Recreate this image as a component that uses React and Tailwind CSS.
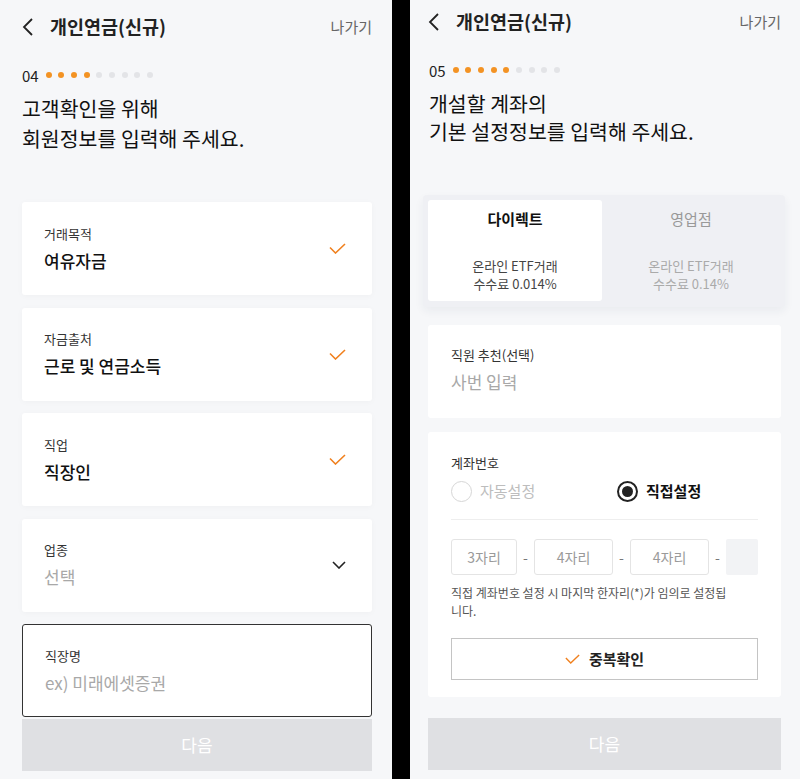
const FONT = { fontFamily: '"Noto Sans CJK KR", "Noto Sans", sans-serif' };

function Chevron() {
  return (
    <svg width="12" height="20" viewBox="0 0 12 20" fill="none">
      <path d="M10 2 L2 10 L10 18" stroke="#222" strokeWidth="1.8" />
    </svg>
  );
}

function Check({ w = 17, h = 11 }) {
  return (
    <svg width={w} height={h} viewBox="0 0 17 11" fill="none">
      <path d="M1 4.5 L6.5 10 L16 1" stroke="#f0801e" strokeWidth="1.6" />
    </svg>
  );
}

function ChevronDown() {
  return (
    <svg width="14" height="8" viewBox="0 0 14 8" fill="none">
      <path d="M1 1 L7 7 L13 1" stroke="#222" strokeWidth="1.6" />
    </svg>
  );
}

function Header({ pad }) {
  return (
    <div className={`flex items-center justify-between ${pad}`}>
      <div className="flex items-center">
        <Chevron />
        <span className="ml-[16px] text-[18.5px] font-bold text-[#222]">개인연금(신규)</span>
      </div>
      <span className="text-[15px] text-[#666]">나가기</span>
    </div>
  );
}

function Steps({ no, done }) {
  return (
    <div className="flex items-center">
      <span className="text-[15px] text-[#222] leading-none">{no}</span>
      <div className="ml-[7px] flex items-center gap-[6.7px]">
        {[0, 1, 2, 3, 4, 5, 6, 7, 8].map((i) => (
          <span
            key={i}
            className={i < done ? 'h-[6px] w-[6px] rounded-full bg-[#f39324]' : 'h-[6px] w-[6px] rounded-full bg-[#e3e4e7]'}
          />
        ))}
      </div>
    </div>
  );
}

function SelCard({ label, value, placeholder, icon, bordered }) {
  return (
    <div
      className={`flex h-[93px] items-center justify-between rounded-[3px] bg-white pl-[22px] pr-[26px] ${
        bordered ? 'border border-[#333]' : 'shadow-[0_1px_6px_rgba(0,0,0,0.03)]'
      }`}
    >
      <div className="flex flex-col">
        <span className="text-[13px] leading-[18px] text-[#333]">{label}</span>
        {value ? (
          <span className="mt-[6px] text-[17px] font-medium leading-[24px] text-[#111]">{value}</span>
        ) : (
          <span className="mt-[6px] text-[17px] leading-[24px] text-[#a8a8a8]">{placeholder}</span>
        )}
      </div>
      {icon}
    </div>
  );
}

function LeftScreen() {
  return (
    <div className="flex w-[392px] shrink-0 flex-col bg-[#f6f7f9]">
      <div className="flex h-[54px] items-center">
        <Header pad="w-full pl-[22px] pr-[20px]" />
      </div>
      <div className="mt-[12px] flex h-[18px] items-center pl-[22px]">
        <Steps no="04" done={4} />
      </div>
      <div className="mt-[9px] pl-[22px] text-[20.5px] leading-[30px] text-[#111]">
        고객확인을 위해
        <br />
        회원정보를 입력해 주세요.
      </div>
      <div className="mt-[49px] flex flex-col gap-[12.5px] pl-[22px] pr-[20px]">
        <SelCard label="거래목적" value="여유자금" icon={<Check />} />
        <SelCard label="자금출처" value="근로 및 연금소득" icon={<Check />} />
        <SelCard label="직업" value="직장인" icon={<Check />} />
        <SelCard label="업종" placeholder="선택" icon={<ChevronDown />} />
        <SelCard label="직장명" placeholder="ex) 미래에셋증권" bordered />
      </div>
      <div className="ml-[22px] mr-[20px] mt-[2px] flex h-[52px] items-center justify-center bg-[#dfe0e3] text-[17px] text-white">
        다음
      </div>
    </div>
  );
}

function Radio({ on, label }) {
  return (
    <div className="flex items-center">
      {on ? (
        <span className="flex h-[21px] w-[21px] items-center justify-center rounded-full border-2 border-[#222]">
          <span className="h-[11px] w-[11px] rounded-full bg-[#222]" />
        </span>
      ) : (
        <span className="h-[21px] w-[21px] rounded-full border border-[#d6d6d6]" />
      )}
      <span className={on ? 'ml-[8px] text-[15px] font-bold text-[#111]' : 'ml-[8px] text-[15px] text-[#bdbdbd]'}>
        {label}
      </span>
    </div>
  );
}

function NumBox({ w, text }) {
  return (
    <div
      className={`flex h-[36px] items-center justify-center rounded-[3px] border border-[#e4e4e4] text-[14px] text-[#9a9a9a] ${w}`}
    >
      {text}
    </div>
  );
}

function Dash() {
  return <span className="w-[17px] text-center text-[14px] text-[#777]">-</span>;
}

function RightScreen() {
  return (
    <div className="flex flex-1 flex-col bg-[#f6f7f9]">
      <div className="flex h-[44px] items-center">
        <Header pad="w-full pl-[18px] pr-[19px]" />
      </div>
      <div className="mt-[17px] flex h-[18px] items-center pl-[19px]">
        <Steps no="05" done={5} />
      </div>
      <div className="mt-[10px] pl-[19px] text-[20.5px] leading-[28px] text-[#111]">
        개설할 계좌의
        <br />
        기본 설정정보를 입력해 주세요.
      </div>
      <div className="ml-[13px] mr-[15px] mt-[50px] flex rounded-[4px] bg-[#eff0f4] p-[5px] pb-[6px] shadow-[0_4px_10px_rgba(40,50,90,0.06)]">
        <div className="flex h-[101px] w-[174px] flex-col items-center rounded-[3px] bg-white">
          <span className="mt-[8px] text-[15px] font-bold leading-[22px] text-[#111]">다이렉트</span>
          <span className="mt-[27px] text-[13px] leading-[18px] text-[#444]">온라인 ETF거래</span>
          <span className="text-[13px] leading-[18px] text-[#444]">수수료 0.014%</span>
        </div>
        <div className="flex h-[101px] flex-1 flex-col items-center">
          <span className="mt-[8px] text-[15px] leading-[22px] text-[#999]">영업점</span>
          <span className="mt-[27px] text-[13px] leading-[18px] text-[#aaa]">온라인 ETF거래</span>
          <span className="text-[13px] leading-[18px] text-[#aaa]">수수료 0.14%</span>
        </div>
      </div>
      <div className="ml-[18px] mr-[19px] mt-[18px] flex h-[93px] flex-col rounded-[3px] bg-white pl-[23px] pt-[21px]">
        <span className="text-[13px] leading-[18px] text-[#333]">직원 추천(선택)</span>
        <span className="mt-[6px] text-[17px] leading-[24px] text-[#a8a8a8]">사번 입력</span>
      </div>
      <div className="ml-[18px] mr-[19px] mt-[14px] flex h-[265px] flex-col rounded-[3px] bg-white px-[23px] pt-[22px]">
        <span className="text-[13px] leading-[18px] text-[#333]">계좌번호</span>
        <div className="mt-[7px] flex h-[24px] items-center">
          <div className="w-[166px]">
            <Radio label="자동설정" />
          </div>
          <Radio on label="직접설정" />
        </div>
        <div className="mt-[16px] h-px bg-[#eeeeee]" />
        <div className="mt-[19px] flex items-center">
          <NumBox w="w-[66px]" text="3자리" />
          <Dash />
          <NumBox w="w-[79px]" text="4자리" />
          <Dash />
          <NumBox w="w-[79px]" text="4자리" />
          <Dash />
          <div className="h-[36px] flex-1 rounded-[2px] bg-[#f2f3f5]" />
        </div>
        <p className="mt-[9px] text-[12px] leading-[17.5px] text-[#555]">
          직접 계좌번호 설정 시 마지막 한자리(*)가 임의로 설정됩
          <br />
          니다.
        </p>
        <div className="mt-[19px] flex h-[42px] items-center justify-center border border-[#c4c4c4]">
          <Check w={15} h={10} />
          <span className="ml-[9px] text-[15px] font-bold text-[#222]">중복확인</span>
        </div>
      </div>
      <div className="ml-[18px] mr-[19px] mt-[21px] flex h-[52px] items-center justify-center bg-[#dfe0e3] text-[17px] text-white">
        다음
      </div>
    </div>
  );
}

export default function App() {
  return (
    <div className="flex h-[779px] w-[800px] overflow-hidden bg-black" style={FONT}>
      <LeftScreen />
      <div className="w-[18px] shrink-0 bg-black" />
      <RightScreen />
    </div>
  );
}
